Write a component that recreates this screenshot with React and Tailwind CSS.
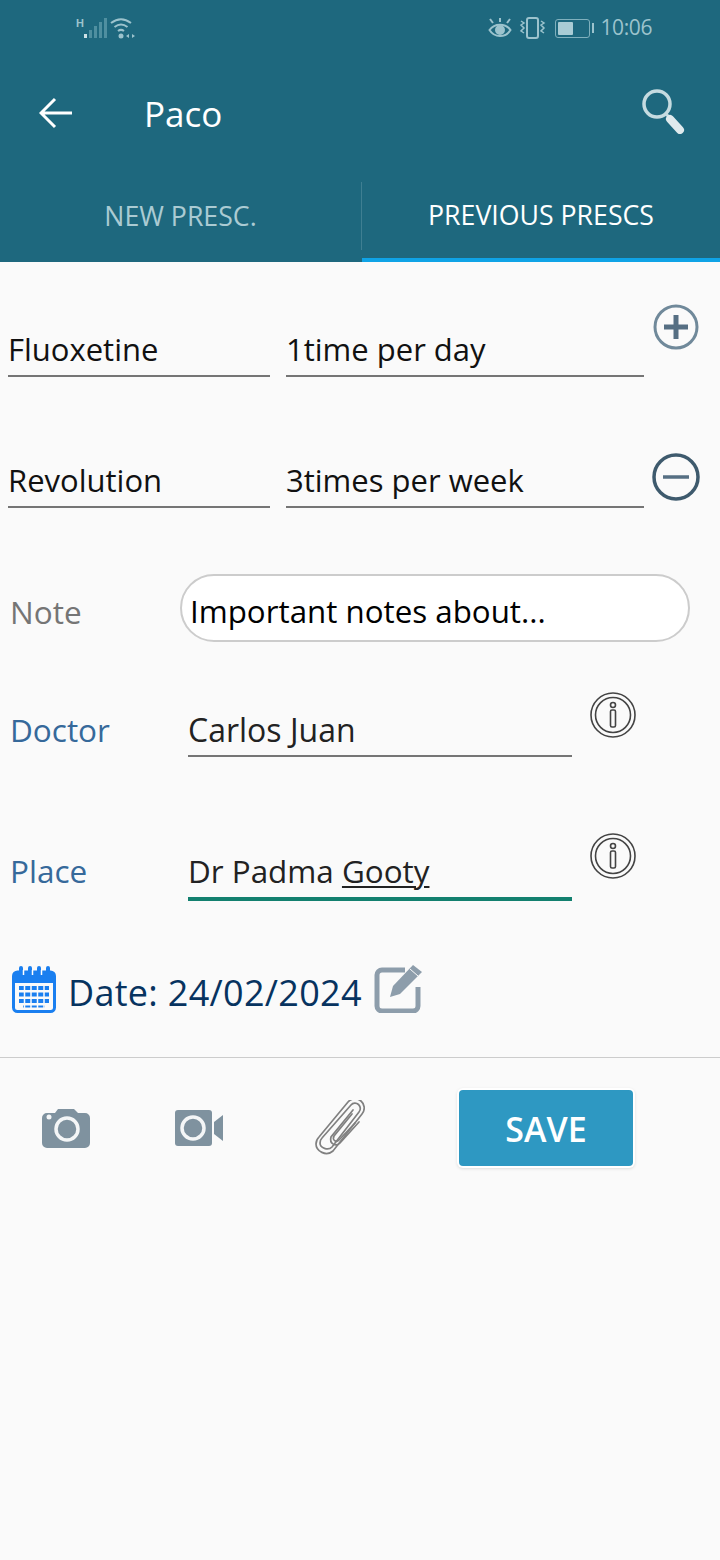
function Signal() {
  return (
    <svg width="62" height="24" viewBox="0 0 62 24" className="text-[#9cc3cd]">
      <text x="0" y="11" fontSize="11" fontWeight="700" fill="currentColor" fontFamily="Liberation Sans">H</text>
      <rect x="8" y="18" width="3" height="4" fill="#cfe2e6" />
      <rect x="13" y="14" width="3" height="8" fill="#4f8fa0" />
      <rect x="18" y="10" width="3" height="12" fill="#4f8fa0" />
      <rect x="23" y="6" width="3" height="16" fill="#4f8fa0" />
      <rect x="28" y="2" width="3" height="20" fill="#4f8fa0" />
      <path d="M35 7c6.500-5 13.500-5 20 0M38.500 11c4.500-3.500 8.500-3.500 13 0M42 15c2-1.500 4-1.500 6 0" fill="none" stroke="currentColor" strokeWidth="2" />
      <circle cx="45" cy="20" r="2.500" fill="currentColor" />
      <path d="M50 20l3-2v4zM56 18l3 2-3 2z" fill="currentColor" />
    </svg>
  );
}

function StatusRight() {
  return (
    <div className="flex items-center text-[#9cc3cd]">
      <svg width="24" height="22" viewBox="0 0 24 22" fill="none" stroke="currentColor" strokeWidth="2">
        <path d="M1.500 13c5-7 16-7 21 0c-5 8-16 8-21 0z" />
        <circle cx="12" cy="13" r="4" fill="currentColor" />
        <path d="M2 2l3 4M12 1v4M22 2l-3 4" />
      </svg>
      <svg width="28" height="24" viewBox="0 0 28 24" fill="none" stroke="currentColor" strokeWidth="2" className="ml-[7px]">
        <rect x="8" y="2" width="11" height="20" rx="2" />
        <path d="M2 5l3 2-3 2 3 3-3 3 3 2M22 5l3 2-3 2 3 3-3 3 3 2" strokeWidth="1.500" />
      </svg>
      <div className="ml-[8px] flex items-center">
        <div className="h-[19px] w-[35px] rounded-[3px] border border-[#7fb0bd] p-[2px]">
          <div className="h-full w-[15px] rounded-[1px] bg-[#a9ccd5]" />
        </div>
        <div className="ml-[2px] h-[10px] w-[2px] bg-[#9cc3cd]" />
      </div>
      <span className="ml-[6px] text-[21px] tracking-[-0.4px]">10:06</span>
    </div>
  );
}

function BackArrow() {
  return (
    <svg width="34" height="32" viewBox="0 0 34 32" fill="none" stroke="#ffffff" strokeWidth="3">
      <path d="M33 16H3M16 2L2 16l14 14" />
    </svg>
  );
}

function SearchIcon() {
  return (
    <svg width="46" height="46" viewBox="0 0 46 46" fill="none" className="text-[#c5dbe0]">
      <circle cx="17" cy="16" r="13" stroke="currentColor" strokeWidth="3.500" />
      <path d="M26 26l3 3" stroke="currentColor" strokeWidth="3" />
      <path d="M30 31l10 11" stroke="#dfeaed" strokeWidth="8" strokeLinecap="round" />
    </svg>
  );
}

function PlusCircle() {
  return (
    <svg width="46" height="46" viewBox="0 0 46 46" fill="none">
      <circle cx="23" cy="23" r="21" stroke="#70899a" strokeWidth="3" />
      <path d="M11 23h24M23 11v24" stroke="#566f83" strokeWidth="5" />
    </svg>
  );
}

function MinusCircle() {
  return (
    <svg width="48" height="48" viewBox="0 0 48 48" fill="none">
      <circle cx="24" cy="24" r="22" stroke="#3e5a6d" strokeWidth="3.500" />
      <path d="M11 24h26" stroke="#566f83" strokeWidth="3.500" />
    </svg>
  );
}

function InfoIcon() {
  return (
    <svg width="46" height="46" viewBox="0 0 46 46" fill="none" stroke="#444444" strokeWidth="1.600">
      <circle cx="23" cy="23" r="22" />
      <circle cx="23" cy="23" r="17.500" />
      <circle cx="23" cy="13" r="2.500" />
      <rect x="20.500" y="18" width="5" height="17" rx="1.500" />
    </svg>
  );
}

function CalendarIcon() {
  return (
    <svg width="44" height="48" viewBox="0 0 44 48" fill="none">
      <rect x="1.500" y="7" width="41" height="39.500" rx="4" stroke="#1a7ff0" strokeWidth="3" />
      <path d="M2 8h40v10H2z" fill="#1a7ff0" />
      <path d="M9 3v8M18 3v8M27 3v8M36 3v8" stroke="#1a7ff0" strokeWidth="4" strokeLinecap="round" />
      <path d="M11.500 5v5M20.500 5v5M29.500 5v5" stroke="#ffffff" strokeWidth="1.500" />
      <path d="M7 21h30v4H7zM7 27.500h30v4H7zM7 34h30v4H7zM11 40.500h22v2H11z" fill="#1a7ff0" />
      <path d="M12.500 20v23M19 20v23M25.500 20v23M32 20v23" stroke="#fafafa" strokeWidth="1.500" />
    </svg>
  );
}

function EditIcon() {
  return (
    <svg width="48" height="48" viewBox="0 0 48 48" fill="none">
      <path d="M31 5H8a5 5 0 0 0-5 5v31a5 5 0 0 0 5 5h31a5 5 0 0 0 5-5V22" stroke="#8d9dab" strokeWidth="5" />
      <path d="M39 0l9 7-22 22-10 3 3-11z" fill="#8d9dab" />
      <path d="M36 4l8 7" stroke="#fafafa" strokeWidth="1" />
    </svg>
  );
}

function CameraIcon() {
  return (
    <svg width="48" height="40" viewBox="0 0 48 40" fill="none">
      <path d="M5 5h8l3-4h16l4 4h7a5 5 0 0 1 5 5v25a5 5 0 0 1-5 5H5a5 5 0 0 1-5-5V10a5 5 0 0 1 5-5z" fill="#7f929f" />
      <circle cx="25" cy="21" r="11" stroke="#f4f6f7" strokeWidth="3.500" />
      <circle cx="7" cy="9" r="2.500" fill="#f4f6f7" />
    </svg>
  );
}

function VideoIcon() {
  return (
    <svg width="48" height="36" viewBox="0 0 48 36" fill="none">
      <rect x="0" y="0" width="37" height="36" rx="3" fill="#7f929f" />
      <circle cx="18" cy="18" r="11" stroke="#f4f6f7" strokeWidth="3.500" />
      <path d="M39 12l9-7v26l-9-7z" fill="#7f929f" />
    </svg>
  );
}

function ClipIcon() {
  return (
    <svg width="50" height="56" viewBox="0 0 50 56" fill="none" stroke="#808080" strokeWidth="1.700" strokeLinecap="round">
      <path d="M33 2a9 9 0 0 1 14 12L18 51c-7 6-17 0-17-7 0-2 1-5 3-7z" />
      <path d="M36 5a5 5 0 0 1 8 7L17 47c-4 4-12 1-12-4 0-2 1-4 2-5z" />
      <path d="M44 22L25 43c-4 4-11 1-9-6l22-27" />
      <path d="M40 23L24 40c-3 3-7 0-5-4L37 14" />
    </svg>
  );
}

function Field({ value, width }) {
  return (
    <div className={`${width} flex h-[52px] items-center border-b-2 border-[#757575] pb-[2px] text-[31px] leading-none text-[#111111]`}>
      {value}
    </div>
  );
}

export default function App() {
  return (
    <div
      className="min-h-[1560px] w-[720px] bg-[#fafafa] text-[32px]"
      style={{ fontFamily: '"Open Sans", "Noto Sans", sans-serif' }}
    >
      <header className="h-[262px] bg-[#1e687e]">
        <div className="flex h-[56px] items-center justify-between pl-[76px] pr-[68px]">
          <Signal />
          <StatusRight />
        </div>
        <div className="flex h-[116px] items-center pl-[39px] pr-[34px]">
          <div className="mb-[2px]"><BackArrow /></div>
          <span className="mb-[2px] ml-[71px] text-[35px] leading-none text-white">Paco</span>
          <div className="mb-[6px] ml-auto">
            <SearchIcon />
          </div>
        </div>
        <div className="flex h-[90px]">
          <div className="flex w-[361px] items-center justify-center pb-[2px] text-[26.700px] text-[#abcbd3]">NEW PRESC.</div>
          <div className="mb-[12px] mt-[10px] w-px bg-[#3f7f92]" />
          <div className="flex flex-1 items-center justify-center border-b-4 border-[#0fa3e6] text-[26.700px] text-white">
            PREVIOUS PRESCS
          </div>
        </div>
      </header>

      <div className="flex h-[115px] items-end pl-[8px]">
        <Field value="Fluoxetine" width="w-[262px]" />
        <div className="ml-[16px]"><Field value="1time per day" width="w-[358px]" /></div>
        <div className="mb-[27px] ml-[9px] self-end"><PlusCircle /></div>
      </div>

      <div className="flex h-[131px] items-end pl-[8px]">
        <Field value="Revolution" width="w-[262px]" />
        <div className="ml-[16px]"><Field value="3times per week" width="w-[358px]" /></div>
        <div className="mb-[7px] ml-[8px]"><MinusCircle /></div>
      </div>

      <div className="mt-[66px] flex items-center pl-[10px]">
        <span className="w-[170px] pt-[7px] text-[31.500px] text-[#757575]">Note</span>
        <div className="flex h-[68px] w-[510px] items-center rounded-[34px] border-2 border-[#cccccc] bg-white pl-[8px] pt-[7px] text-[31.300px] text-black">
          Important notes about...
        </div>
      </div>

      <div className="flex h-[115px] items-end pl-[10px]">
        <span className="mb-[4px] w-[178px] text-[31.500px] text-[#36699a]">Doctor</span>
        <div className="flex h-[52px] w-[384px] items-center border-b-2 border-[#757575] text-[#222222]">Carlos Juan</div>
        <div className="mb-[19px] ml-[18px]"><InfoIcon /></div>
      </div>

      <div className="flex h-[144px] items-end pl-[10px]">
        <span className="mb-[7px] w-[178px] text-[31.500px] text-[#36699a]">Place</span>
        <div className="flex h-[52px] w-[384px] items-center border-b-4 border-[#12806f] pb-[4px] text-[31.400px] text-[#222222]">
          <span>Dr Padma&nbsp;</span>
          <span className="underline decoration-2 underline-offset-[3px]">Gooty</span>
        </div>
        <div className="mb-[22px] ml-[18px]"><InfoIcon /></div>
      </div>

      <div className="mt-[64px] flex h-[48px] items-center pl-[12px]">
        <CalendarIcon />
        <span className="ml-[12px] pt-[8px] text-[36px] leading-none tracking-[0.3px] text-[#07335f]">Date: 24/02/2024</span>
        <div className="ml-[12px]"><EditIcon /></div>
      </div>

      <div className="mt-[44px] h-px bg-[#cccccc]" />

      <div className="mt-[32px] flex items-center pl-[42px]">
        <CameraIcon />
        <div className="ml-[85px]"><VideoIcon /></div>
        <div className="ml-[92px]"><ClipIcon /></div>
        <button className="ml-[94px] flex h-[76px] w-[174px] items-center justify-center rounded-[4px] bg-[#2e98c2] pt-[3px] text-[34px] font-semibold text-white shadow-[0_0_0_2px_#ffffff,0_1px_3px_2px_#dddddd]">
          SAVE
        </button>
      </div>
    </div>
  );
}
